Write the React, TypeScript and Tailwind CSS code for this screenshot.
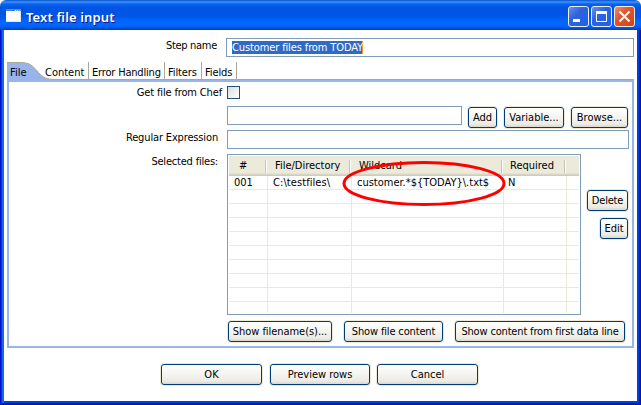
import React from 'react';

const fieldClass = 'border border-[#7f9db9] bg-white';

function Button({ className, children }: { className: string; children: React.ReactNode }) {
  return (
    <button
      className={`flex h-[21px] shrink-0 items-center justify-center whitespace-nowrap rounded-[3px] border border-[#003c74] bg-[linear-gradient(to_bottom,#fff_0%,#f5f5f1_45%,#ecebe5_85%,#d9d5cb_100%)] pt-px shadow-[0_0_0_1px_#ece9d8] ${className}`}
    >
      {children}
    </button>
  );
}

function Label({ className, children }: { className: string; children: React.ReactNode }) {
  return <span className={`block h-[15px] whitespace-nowrap leading-[15px] ${className}`}>{children}</span>;
}

function TitleBar() {
  return (
    <header className="flex h-[30px] shrink-0 items-start rounded-t-[6px] bg-[linear-gradient(to_bottom,#0a50c8_0px,#3c93ff_2px,#0b62ee_4px,#0054e3_8px,#0055e5_16px,#0066ff_21px,#0066ff_26px,#0048d0_29px,#003cc0_30px)] pl-[6px] pr-[6px]">
      <svg className="mt-[9px] h-[13px] w-[15px]" viewBox="0 0 15 13" shapeRendering="crispEdges">
        <rect width="15" height="13" fill="#fff" />
        <rect width="15" height="2" fill="#4f96ee" />
        <rect y="1" width="9" height="1" fill="#2c80ea" />
        <rect x="9" y="1" width="1" height="1" fill="#d8e8ff" />
        <rect x="11" y="1" width="1" height="1" fill="#d8e8ff" />
        <rect x="13" y="1" width="1" height="1" fill="#f0907a" />
        <rect y="12" width="15" height="1" fill="#e7e5d8" />
        <rect x="14" y="2" width="1" height="11" fill="#e7e5d8" />
      </svg>
      <h1 className="ml-[5px] mt-[9px] whitespace-nowrap font-['Noto_Sans',sans-serif] text-[13px] font-semibold leading-[16px] tracking-[0.13px] text-white [text-shadow:1px_1px_#0a1883]">
        Text file input
      </h1>
      <svg className="ml-auto mt-[6px] h-[21px] w-[67px]" viewBox="0 0 67 21">
        <defs>
          <linearGradient id="blue" x1="0" y1="0" x2="1" y2="1">
            <stop offset="0" stopColor="#6f93ea" />
            <stop offset=".4" stopColor="#2f62dc" />
            <stop offset="1" stopColor="#1c62ea" />
          </linearGradient>
          <linearGradient id="red" x1="0" y1="0" x2="1" y2="1">
            <stop offset="0" stopColor="#ee9578" />
            <stop offset=".4" stopColor="#e0562f" />
            <stop offset="1" stopColor="#cc4218" />
          </linearGradient>
        </defs>
        <rect x=".5" y=".5" width="20" height="20" rx="2.5" fill="url(#blue)" stroke="#e8efff" />
        <rect x="23.5" y=".5" width="20" height="20" rx="2.5" fill="url(#blue)" stroke="#e8efff" />
        <rect x="46.5" y=".5" width="20" height="20" rx="2.5" fill="url(#red)" stroke="#fbe9e4" />
        <rect x="5" y="13" width="7" height="3" fill="#fff" />
        <path d="M28.500 5v10.500h10V5" fill="none" stroke="#fff" />
        <path d="M28 6.500h11" stroke="#fff" strokeWidth="3" />
        <path d="M51.500 5.500l10 10M61.500 5.500l-10 10" stroke="#fff" strokeWidth="2" />
      </svg>
    </header>
  );
}

function Tabs() {
  return (
    <nav className="relative flex h-[18px] pt-[3px]">
      <svg className="absolute left-0 top-0 h-[18px] w-[627px]" viewBox="0 0 627 18">
        <path d="M0 18V.5H14C32 .5 28 17.500 47 17.500V18Z" fill="#99b4ea" />
        <path d="M0 .5H14C32 .5 28 17.500 47 17.500H627" fill="none" stroke="#aca899" />
        <path d="M81.500 0V17M157.500 0V17M194.500 0V17M229.500 0V17" stroke="#aca899" />
      </svg>
      <Label className="relative ml-[3px] w-[35px]">File</Label>
      <Label className="relative w-[47px]">Content</Label>
      <Label className="relative w-[76px] tracking-[-0.18px]">Error Handling</Label>
      <Label className="relative w-[37px] tracking-[-0.1px]">Filters</Label>
      <Label className="relative tracking-[-0.1px]">Fields</Label>
    </nav>
  );
}

function HeaderCell({ className, children }: { className: string; children?: React.ReactNode }) {
  return (
    <span className={`flex items-center ${className}`}>
      {children}
      <i className="ml-auto h-[13px] w-[2px] border-l border-[#c7c5b2] bg-white" />
    </span>
  );
}

function FileTable() {
  const columns = 'grid grid-cols-[39px_84px_152px_63px_12px]';
  return (
    <div className={`relative h-[161px] w-[354px] p-px text-black ${fieldClass}`}>
      <div className="grid h-[20px] grid-cols-[38px_84px_152px_63px_13px] bg-[linear-gradient(to_bottom,#ebeadb_0px,#ebeadb_17px,#dedbca_18px,#cbc7b8_20px)] leading-[18px]">
        <HeaderCell className="pl-[10px]">#</HeaderCell>
        <HeaderCell className="pl-[8px]">File/Directory</HeaderCell>
        <HeaderCell className="pl-[8px]">Wildcard</HeaderCell>
        <HeaderCell className="pl-[7px]">Required</HeaderCell>
      </div>
      {Array.from({ length: 10 }, (_, row) => (
        <div key={row} className={`${columns} leading-[14px] ${row === 9 ? 'h-[11px]' : 'h-[14px] border-b border-[#ece9d8]'}`}>
          <span className="border-r border-[#ece9d8] pl-[5px]">{row === 0 && '001'}</span>
          <span className="border-r border-[#ece9d8] pl-[5px] tracking-[0.08px]">{row === 0 && 'C:\\testfiles\\'}</span>
          <span className="border-r border-[#ece9d8] pl-[5px]">{row === 0 && 'customer.*${TODAY}\\.txt$'}</span>
          <span className="border-r border-[#ece9d8] pl-[4px]">{row === 0 && 'N'}</span>
          <span />
        </div>
      ))}
      <svg className="absolute left-[113px] top-[4px] h-[48px] w-[168px]" viewBox="0 0 168 48">
        <ellipse cx="83" cy="24.500" rx="80" ry="21" fill="none" stroke="#f00" strokeWidth="3" />
      </svg>
    </div>
  );
}

export default function App() {
  return (
    <main className="flex h-[405px] w-[641px] flex-col overflow-hidden bg-white font-['DejaVu_Sans_Condensed','DejaVu_Sans',sans-serif] text-[11px] text-black">
      <TitleBar />
      <div className="flex h-[375px] flex-col px-[7px] shadow-[inset_1px_0_#0013c8,inset_-1px_0_#0013a8,inset_0_-2px_#0016a8,inset_2px_0_#0831d9,inset_-2px_0_#0020c8,inset_4px_0_#1666ee,inset_-4px_-4px_#0040e0]">
        <div className="flex h-[32px]">
          <Label className="mt-[8px] w-[210px] text-right tracking-[-0.3px]">Step name</Label>
          <div className={`ml-[9px] mt-[8px] h-[19px] w-[408px] pl-[5px] pt-[2px] ${fieldClass}`}>
            <span className="block h-[13px] w-[131px] whitespace-nowrap border-r border-[#e09a38] bg-[#316ac5] leading-[13px] tracking-[-0.12px] text-white">
              Customer files from TODAY
            </span>
          </div>
        </div>
        <Tabs />
        <section className="h-[268px] border-2 border-[#99b4ea]">
          <div className="flex h-[24px] pt-[3px]">
            <Label className="w-[213px] text-right tracking-[-0.15px]">Get file from Chef</Label>
            <span className="ml-[5px] mt-px h-[13px] w-[13px] border border-[#1c5180] bg-linear-to-br from-[#dcdcd7] to-white" />
          </div>
          <div className="flex h-[24px]">
            <span className={`ml-[218px] h-[19px] w-[235px] ${fieldClass}`} />
            <Button className="ml-[6px] mt-px w-[29px]">Add</Button>
            <Button className="ml-[7px] mt-px w-[60px]">Variable...</Button>
            <Button className="ml-[7px] mt-px w-[57px]">Browse...</Button>
          </div>
          <div className="flex h-[24px]">
            <Label className="w-[209px] text-right tracking-[-0.15px]">Regular Expression</Label>
            <span className={`ml-[9px] h-[19px] w-[402px] ${fieldClass}`} />
          </div>
          <div className="flex h-[167px]">
            <Label className="w-[209px] text-right tracking-[-0.2px]">Selected files:</Label>
            <div className="ml-[9px]">
              <FileTable />
            </div>
            <div className="flex w-[47px] flex-col items-end gap-[7px] pt-[36px]">
              <Button className="w-[41px] tracking-[-0.2px]">Delete</Button>
              <Button className="w-[28px]">Edit</Button>
            </div>
          </div>
          <div className="flex gap-[12px] pl-[219px]">
            <Button className="w-[104px] tracking-[-0.05px]">Show filename(s)...</Button>
            <Button className="w-[99px] tracking-[-0.15px]">Show file content</Button>
            <Button className="w-[170px] tracking-[-0.17px]">Show content from first data line</Button>
          </div>
        </section>
        <footer className="flex pl-[154px] pt-[16px]">
          <Button className="w-[101px]">OK</Button>
          <Button className="ml-[8px] w-[100px]">Preview rows</Button>
          <Button className="ml-[7px] w-[101px]">Cancel</Button>
        </footer>
      </div>
    </main>
  );
}
